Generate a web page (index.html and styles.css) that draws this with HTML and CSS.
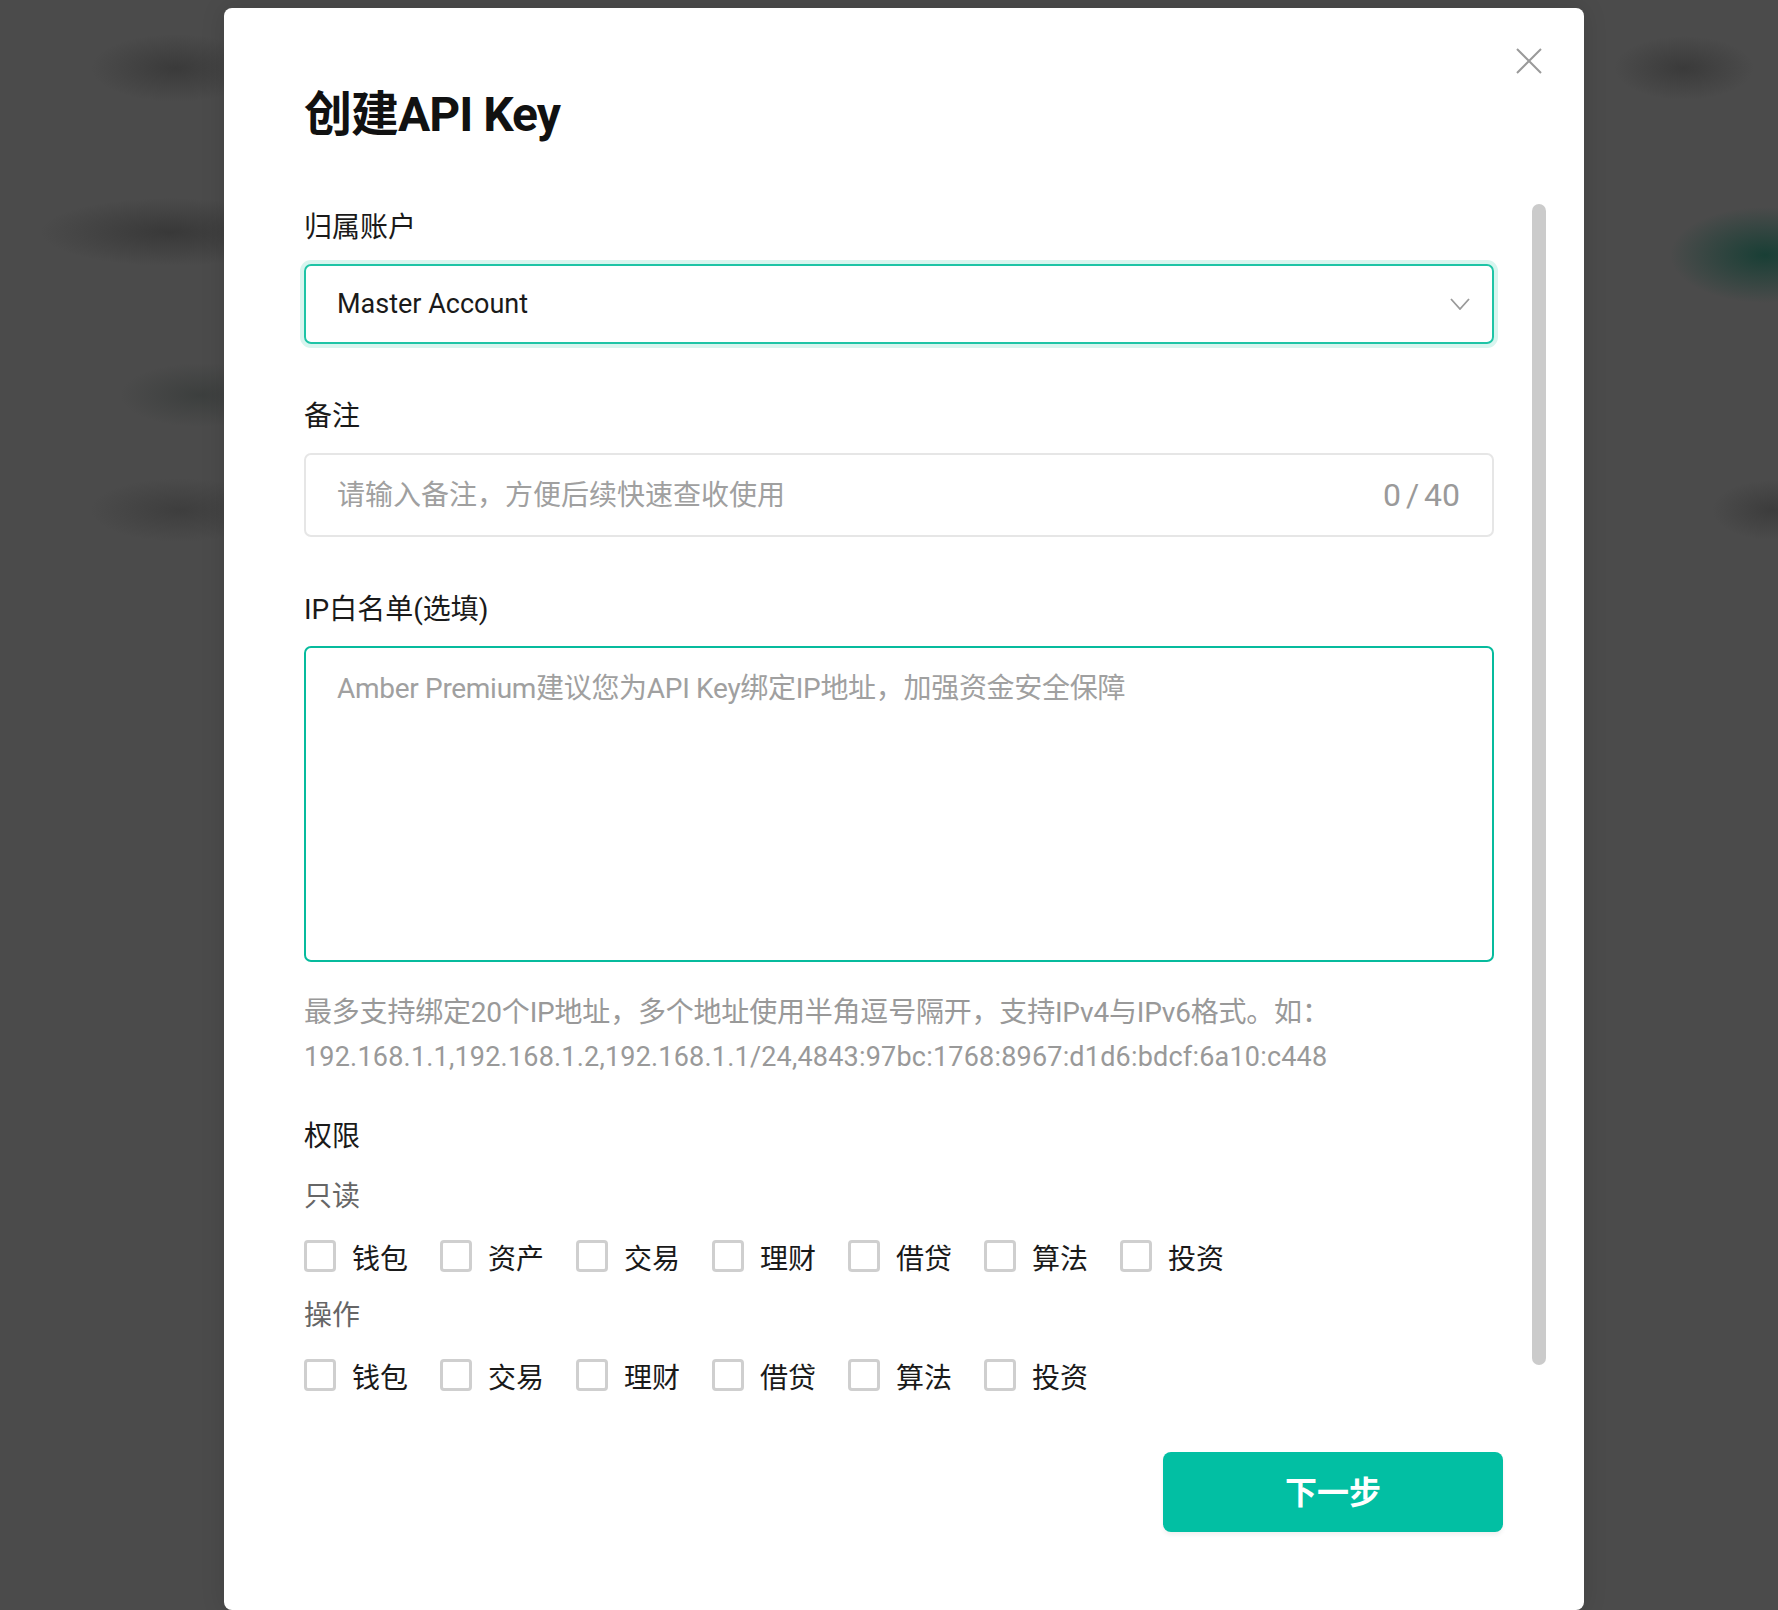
FILE: index.html
```html
<!DOCTYPE html>
<html lang="zh-CN">
<head>
<meta charset="utf-8">
<title>创建API Key</title>
<link rel="stylesheet" href="styles.css">
</head>
<body>
<div class="modal">
  <button class="close" type="button" aria-label="关闭">
    <svg width="26" height="26" viewBox="0 0 26 26"><path d="M1 1 L25 25 M25 1 L1 25" stroke="#9a9a9a" stroke-width="2" fill="none"/></svg>
  </button>
  <h1 class="title">创建API Key</h1>
  <div class="body">
    <div class="field">
      <div class="label">归属账户</div>
      <div class="select">
        <span class="select-value">Master Account</span>
        <svg class="chevron" width="20" height="12" viewBox="0 0 20 12"><polyline points="1,1 10,11 19,1" stroke="#9a9a9a" stroke-width="1.8" fill="none"/></svg>
      </div>
    </div>
    <div class="field">
      <div class="label">备注</div>
      <div class="input">
        <input class="input-el" type="text" placeholder="请输入备注，方便后续快速查收使用">
        <span class="count">0 / 40</span>
      </div>
    </div>
    <div class="field">
      <div class="label">IP白名单(选填)</div>
      <textarea class="textarea" placeholder="Amber Premium建议您为API Key绑定IP地址，加强资金安全保障"></textarea>
      <p class="hint">最多支持绑定20个IP地址，多个地址使用半角逗号隔开，支持IPv4与IPv6格式。如：<br><span class="hint-ips">192.168.1.1,192.168.1.2,192.168.1.1/24,4843:97bc:1768:8967:d1d6:bdcf:6a10:c448</span></p>
    </div>
    <div class="perm">
      <div class="label">权限</div>
      <div class="sub sub-first">只读</div>
      <div class="checks">
        <label class="check"><input type="checkbox"><span>钱包</span></label>
        <label class="check"><input type="checkbox"><span>资产</span></label>
        <label class="check"><input type="checkbox"><span>交易</span></label>
        <label class="check"><input type="checkbox"><span>理财</span></label>
        <label class="check"><input type="checkbox"><span>借贷</span></label>
        <label class="check"><input type="checkbox"><span>算法</span></label>
        <label class="check"><input type="checkbox"><span>投资</span></label>
      </div>
      <div class="sub sub-second">操作</div>
      <div class="checks">
        <label class="check"><input type="checkbox"><span>钱包</span></label>
        <label class="check"><input type="checkbox"><span>交易</span></label>
        <label class="check"><input type="checkbox"><span>理财</span></label>
        <label class="check"><input type="checkbox"><span>借贷</span></label>
        <label class="check"><input type="checkbox"><span>算法</span></label>
        <label class="check"><input type="checkbox"><span>投资</span></label>
      </div>
    </div>
  </div>
  <div class="scrollbar"></div>
  <div class="footer">
    <button class="next" type="button">下一步</button>
  </div>
</div>
</body>
</html>
```

FILE: styles.css
```css
html, body {
  margin: 0;
  padding: 0;
  height: 1610px;
  overflow: hidden;
}

body {
  font-family: Roboto, "Noto Sans CJK SC", sans-serif;
  background-color: #4b4b4b;
  background-image:
    radial-gradient(ellipse 85px 34px at 176px 68px, rgba(38,38,38,0.45), rgba(38,38,38,0) 100%),
    radial-gradient(ellipse 130px 34px at 170px 232px, rgba(38,38,38,0.5), rgba(38,38,38,0) 100%),
    radial-gradient(ellipse 80px 32px at 200px 395px, rgba(42,48,46,0.45), rgba(40,40,40,0) 100%),
    radial-gradient(ellipse 90px 32px at 180px 510px, rgba(42,42,42,0.4), rgba(40,40,40,0) 100%),
    radial-gradient(ellipse 70px 32px at 1684px 68px, rgba(38,38,38,0.45), rgba(38,38,38,0) 100%),
    radial-gradient(ellipse 95px 48px at 1765px 255px, rgba(22,62,52,0.95), rgba(22,62,52,0) 100%),
    radial-gradient(ellipse 60px 30px at 1772px 510px, rgba(42,42,42,0.45), rgba(40,40,40,0) 100%);
}

.modal {
  position: relative;
  box-sizing: border-box;
  width: 1360px;
  height: 1602px;
  margin: 8px 0 0 224px;
  padding: 79px 81px 0 80px;
  background: #fff;
  border-radius: 8px;
  box-shadow: 0 0 24px rgba(0, 0, 0, 0.12);
  display: flex;
  flex-direction: column;
}

.close {
  position: absolute;
  top: 40px;
  right: 42px;
  width: 26px;
  height: 26px;
  padding: 0;
  border: 0;
  background: none;
  display: flex;
}

.title {
  margin: 0;
  font-size: 48px;
  line-height: 56px;
  font-weight: 700;
  letter-spacing: -1px;
  color: #111;
}

.body {
  width: 1190px;
  margin-top: 62px;
}

.label {
  padding-top: 3px;
  font-size: 28px;
  line-height: 40px;
  color: #1a1a1a;
}

.field + .field {
  margin-top: 50px;
}

.field .label {
  margin-bottom: 16px;
}

.select {
  box-sizing: border-box;
  height: 80px;
  border: 2px solid #1ec4a6;
  border-radius: 7px;
  box-shadow: 0 0 0 4px #d8f5ef;
  display: flex;
  align-items: center;
  justify-content: space-between;
  padding: 0 22px 0 31px;
}

.select-value {
  font-size: 27px;
  color: #1a1a1a;
}

.chevron {
  display: block;
}

.input {
  box-sizing: border-box;
  height: 84px;
  border: 2px solid #e6e6e6;
  border-radius: 7px;
  display: flex;
  align-items: center;
  padding: 0 32px 0 31px;
}

.input-el {
  flex: 1;
  min-width: 0;
  border: 0;
  outline: none;
  padding: 0;
  font-family: Roboto, "Noto Sans CJK SC", sans-serif;
  font-size: 28px;
  color: #1a1a1a;
  background: transparent;
}

.input-el::placeholder,
.textarea::placeholder {
  color: #a0a0a0;
}

.count {
  font-size: 32px;
  word-spacing: -3px;
  color: #9a9a9a;
}

.textarea {
  display: block;
  box-sizing: border-box;
  width: 100%;
  height: 316px;
  margin: 0;
  border: 2px solid #06bb9d;
  border-radius: 7px;
  padding: 19px 31px 15px;
  resize: none;
  outline: none;
  font-family: Roboto, "Noto Sans CJK SC", sans-serif;
  font-size: 28px;
  line-height: 44px;
  letter-spacing: -0.3px;
  color: #1a1a1a;
}

.hint {
  margin: 29px 0 0;
  font-size: 28px;
  line-height: 44px;
  letter-spacing: -0.2px;
  color: #999;
}

.hint-ips {
  font-size: 27px;
  letter-spacing: 0.2px;
}

.perm {
  margin-top: 35px;
}

.sub {
  font-size: 28px;
  line-height: 40px;
  color: #666;
}

.sub-first {
  margin-top: 20px;
}

.sub-second {
  margin-top: 20px;
}

.checks {
  display: flex;
  column-gap: 32px;
  margin-top: 19px;
}

.sub-second + .checks {
  margin-top: 19px;
}

.check {
  display: flex;
  align-items: center;
  gap: 16px;
  height: 40px;
  font-size: 28px;
  color: #1a1a1a;
}

.check span {
  padding-top: 2px;
}

.check input {
  appearance: none;
  -webkit-appearance: none;
  box-sizing: border-box;
  width: 32px;
  height: 32px;
  margin: 0;
  border: 3px solid #cfcfcf;
  border-radius: 4px;
  background: #fff;
}

.scrollbar {
  position: absolute;
  left: 1308px;
  top: 196px;
  width: 14px;
  height: 1161px;
  border-radius: 7px;
  background: #cbcbcb;
}

.footer {
  margin-top: 57px;
  display: flex;
  justify-content: flex-end;
}

.next {
  width: 340px;
  height: 80px;
  padding: 0 0 5px;
  border: 0;
  border-radius: 8px;
  background: #02bfa3;
  box-shadow: 0 3px 4px rgba(0, 0, 0, 0.06);
  color: #fff;
  font-family: Roboto, "Noto Sans CJK SC", sans-serif;
  font-size: 32px;
  font-weight: 700;
}
```
